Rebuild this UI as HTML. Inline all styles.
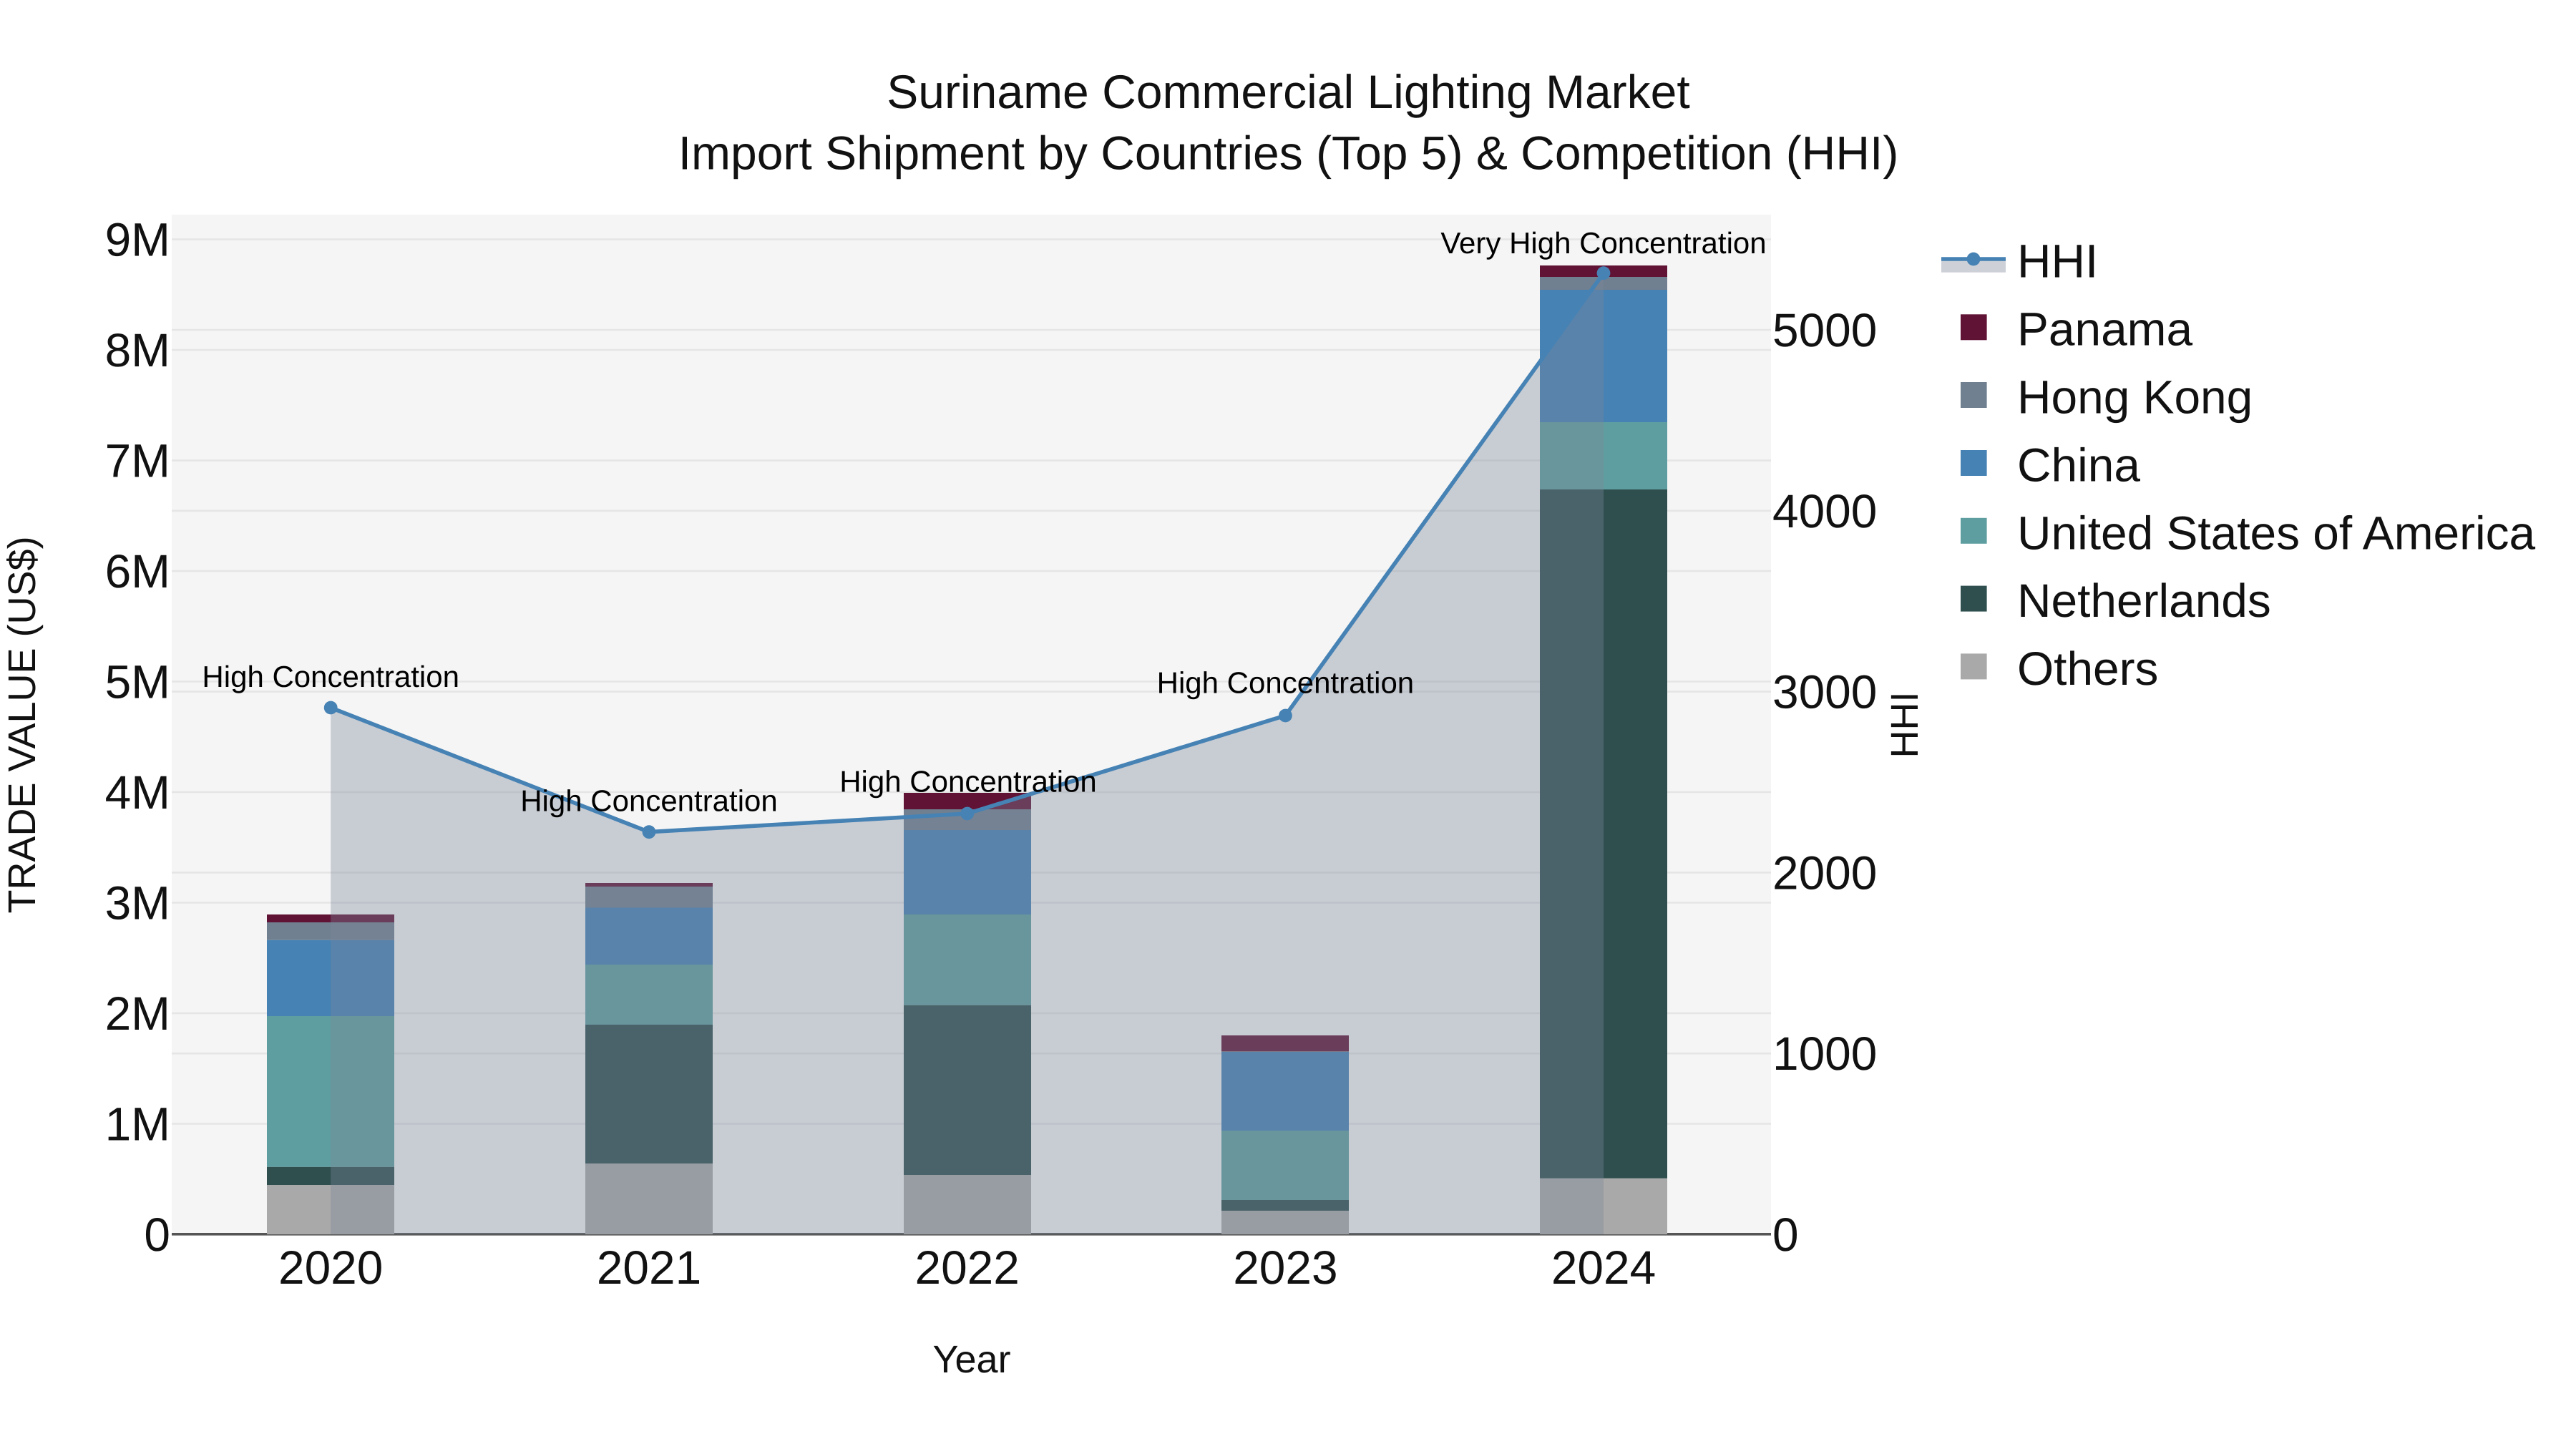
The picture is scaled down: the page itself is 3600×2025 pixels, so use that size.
<!DOCTYPE html>
<html lang="en">
<head>
<meta charset="utf-8">
<title>Suriname Commercial Lighting Market</title>
<style>
html,body{margin:0;padding:0;background:#fff;width:3600px;height:2025px;overflow:hidden}
svg{display:block;position:absolute;left:0;top:0}
text{font-family:"Liberation Sans",sans-serif;fill:#111;text-rendering:geometricPrecision}
.t{font-size:66px}
.a{font-size:42px;fill:#000;text-anchor:middle}
.x{font-size:65.8px;text-anchor:middle}
.yl{font-size:65.8px;text-anchor:end}
.yr{font-size:65.8px;text-anchor:start}
.lg{font-size:65.8px}
.at{font-size:54px}
</style>
</head>
<body>
<svg width="3600" height="2025" viewBox="0 0 3600 2025" xmlns="http://www.w3.org/2000/svg">
<rect width="3600" height="2025" fill="#fff"/>
<rect x="240" y="300" width="2235" height="1425" fill="#f5f5f5"/>

<g stroke="#e5e5e5" stroke-width="2.6" fill="none">
<path d="M240 1570.5H2475M240 1416H2475M240 1261.5H2475M240 1107H2475M240 952.5H2475M240 798H2475M240 643.5H2475M240 489H2475M240 334.5H2475"/>
<path d="M240 1472.2H2475M240 1219.4H2475M240 966.6H2475M240 713.8H2475M240 461H2475"/>
</g>
<rect x="240" y="1723" width="2235" height="3.6" fill="#555"/>

<!-- 2020 -->
<g>
<rect x="373" y="1656" width="178" height="69" fill="#a9a9a9"/>
<rect x="373" y="1630.7" width="178" height="25.3" fill="#2f4f4f"/>
<rect x="373" y="1420" width="178" height="210.7" fill="#5f9ea0"/>
<rect x="373" y="1313.7" width="178" height="106.3" fill="#4682b4"/>
<rect x="373" y="1289" width="178" height="24.7" fill="#708090"/>
<rect x="373" y="1278" width="178" height="11" fill="#611336"/>
</g>
<!-- 2021 -->
<g>
<rect x="818" y="1626" width="178" height="99" fill="#a9a9a9"/>
<rect x="818" y="1432" width="178" height="194" fill="#2f4f4f"/>
<rect x="818" y="1348" width="178" height="84" fill="#5f9ea0"/>
<rect x="818" y="1268.5" width="178" height="79.5" fill="#4682b4"/>
<rect x="818" y="1239" width="178" height="29.5" fill="#708090"/>
<rect x="818" y="1234" width="178" height="5" fill="#611336"/>
</g>
<!-- 2022 -->
<g>
<rect x="1263" y="1642" width="178" height="83" fill="#a9a9a9"/>
<rect x="1263" y="1404.7" width="178" height="237.3" fill="#2f4f4f"/>
<rect x="1263" y="1278" width="178" height="126.7" fill="#5f9ea0"/>
<rect x="1263" y="1160" width="178" height="118" fill="#4682b4"/>
<rect x="1263" y="1131" width="178" height="29" fill="#708090"/>
<rect x="1263" y="1108" width="178" height="23" fill="#611336"/>
</g>
<!-- 2023 -->
<g>
<rect x="1707" y="1692" width="178" height="33" fill="#a9a9a9"/>
<rect x="1707" y="1677" width="178" height="15" fill="#2f4f4f"/>
<rect x="1707" y="1580" width="178" height="97" fill="#5f9ea0"/>
<rect x="1707" y="1470" width="178" height="110" fill="#4682b4"/>
<rect x="1707" y="1469.3" width="178" height="0.7" fill="#708090"/>
<rect x="1707" y="1447" width="178" height="22.3" fill="#611336"/>
</g>
<!-- 2024 -->
<g>
<rect x="2152" y="1646.7" width="178" height="78.3" fill="#a9a9a9"/>
<rect x="2152" y="684" width="178" height="962.7" fill="#2f4f4f"/>
<rect x="2152" y="590" width="178" height="94" fill="#5f9ea0"/>
<rect x="2152" y="405" width="178" height="185" fill="#4682b4"/>
<rect x="2152" y="387" width="178" height="18" fill="#708090"/>
<rect x="2152" y="371" width="178" height="16" fill="#611336"/>
</g>

<!-- HHI area -->
<polygon points="462.2,1725 462.2,989 907,1162.7 1351.7,1137 1796.4,1000 2241,381.7 2241,1725" fill="rgb(123,135,153)" fill-opacity="0.364"/>
<polyline points="462.2,989 907,1162.7 1351.7,1137 1796.4,1000 2241,381.7" fill="none" stroke="#4682b4" stroke-width="5.6" stroke-linejoin="round"/>
<g fill="#4682b4">
<circle cx="462.2" cy="989" r="9.4"/>
<circle cx="907" cy="1162.7" r="9.4"/>
<circle cx="1351.7" cy="1137" r="9.4"/>
<circle cx="1796.4" cy="1000" r="9.4"/>
<circle cx="2241" cy="381.7" r="9.4"/>
</g>

<!-- annotations -->
<text class="a" x="462.2" y="960">High Concentration</text>
<text class="a" x="907" y="1133.3">High Concentration</text>
<text class="a" x="1353" y="1106.7">High Concentration</text>
<text class="a" x="1796.4" y="968.3">High Concentration</text>
<text class="a" x="2241" y="354">Very High Concentration</text>

<!-- title -->
<text class="t" x="1800.5" y="151" text-anchor="middle">Suriname Commercial Lighting Market</text>
<text class="t" x="1800.5" y="236.5" text-anchor="middle">Import Shipment by Countries (Top 5) &amp; Competition (HHI)</text>

<!-- x ticks -->
<text class="x" x="462.2" y="1794">2020</text>
<text class="x" x="907" y="1794">2021</text>
<text class="x" x="1351.7" y="1794">2022</text>
<text class="x" x="1796.4" y="1794">2023</text>
<text class="x" x="2241" y="1794">2024</text>
<text class="at" x="1358" y="1918" text-anchor="middle">Year</text>

<!-- left ticks -->
<text class="yl" x="238" y="1748">0</text>
<text class="yl" x="238" y="1593.5">1M</text>
<text class="yl" x="238" y="1439">2M</text>
<text class="yl" x="238" y="1284.5">3M</text>
<text class="yl" x="238" y="1130">4M</text>
<text class="yl" x="238" y="975.5">5M</text>
<text class="yl" x="238" y="821">6M</text>
<text class="yl" x="238" y="666.5">7M</text>
<text class="yl" x="238" y="512">8M</text>
<text class="yl" x="238" y="357.5">9M</text>
<text class="at" transform="translate(49 1013) rotate(-90)" text-anchor="middle">TRADE VALUE (US$)</text>

<!-- right ticks -->
<text class="yr" x="2477" y="1748">0</text>
<text class="yr" x="2477" y="1495.2">1000</text>
<text class="yr" x="2477" y="1242.4">2000</text>
<text class="yr" x="2477" y="989.6">3000</text>
<text class="yr" x="2477" y="736.8">4000</text>
<text class="yr" x="2477" y="484">5000</text>
<text class="at" transform="translate(2680 1013) rotate(-90)" text-anchor="middle">HHI</text>

<!-- legend -->
<rect x="2713" y="362" width="90" height="18.7" fill="#cdd1d7"/>
<path d="M2713 362H2803" stroke="#4682b4" stroke-width="5.5" fill="none"/>
<circle cx="2758" cy="362" r="9.4" fill="#4682b4"/>
<text class="lg" x="2819" y="387.7">HHI</text>
<rect x="2740" y="439.3" width="36.6" height="36" fill="#611336"/>
<text class="lg" x="2819" y="482.7">Panama</text>
<rect x="2740" y="534" width="36.6" height="36" fill="#708090"/>
<text class="lg" x="2819" y="577.7">Hong Kong</text>
<rect x="2740" y="629" width="36.6" height="36" fill="#4682b4"/>
<text class="lg" x="2819" y="672.6">China</text>
<rect x="2740" y="723.8" width="36.6" height="36" fill="#5f9ea0"/>
<text class="lg" x="2819" y="767.4">United States of America</text>
<rect x="2740" y="818.6" width="36.6" height="36" fill="#2f4f4f"/>
<text class="lg" x="2819" y="862.2">Netherlands</text>
<rect x="2740" y="913.4" width="36.6" height="36" fill="#a9a9a9"/>
<text class="lg" x="2819" y="957">Others</text>
</svg>
</body>
</html>
